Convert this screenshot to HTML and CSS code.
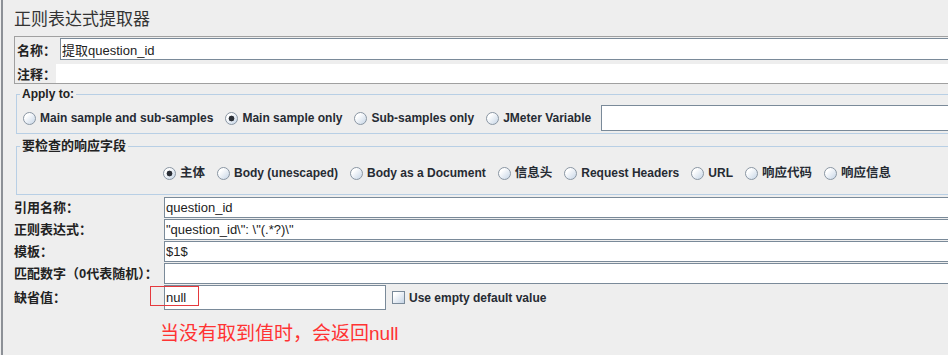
FILE: index.html
```html
<!DOCTYPE html>
<html lang="zh-CN">
<head>
  <meta charset="UTF-8">
  <title>正则表达式提取器</title>
  <link rel="stylesheet" href="styles.css">
</head>
<body>

<div class="editor">
  <h1 class="title">正则表达式提取器</h1>

  <!-- 名称 / 注释 -->
  <div class="name-box">
    <div class="name-row">
      <label for="name">名称：</label>
      <input type="text" id="name" value="提取question_id">
    </div>
    <div class="comment-row">
      <label for="comment">注释：</label>
      <input type="text" id="comment">
    </div>
  </div>

  <!-- Apply to -->
  <fieldset class="group apply">
    <legend>Apply to:</legend>
    <div class="radio-row">
      <label class="opt"><input type="radio" name="scope" class="radio">Main sample and sub-samples</label>
      <label class="opt"><input type="radio" name="scope" class="radio" checked>Main sample only</label>
      <label class="opt"><input type="radio" name="scope" class="radio">Sub-samples only</label>
      <label class="opt last"><input type="radio" name="scope" class="radio">JMeter Variable</label>
      <input type="text" class="var-input">
    </div>
  </fieldset>

  <!-- 要检查的响应字段 -->
  <fieldset class="group fields">
    <legend>要检查的响应字段</legend>
    <div class="radio-row field-row">
      <label class="opt cjk"><input type="radio" name="field" class="radio" checked>主体</label>
      <label class="opt"><input type="radio" name="field" class="radio">Body (unescaped)</label>
      <label class="opt"><input type="radio" name="field" class="radio">Body as a Document</label>
      <label class="opt cjk"><input type="radio" name="field" class="radio">信息头</label>
      <label class="opt"><input type="radio" name="field" class="radio">Request Headers</label>
      <label class="opt"><input type="radio" name="field" class="radio">URL</label>
      <label class="opt cjk"><input type="radio" name="field" class="radio">响应代码</label>
      <label class="opt cjk"><input type="radio" name="field" class="radio">响应信息</label>
    </div>
  </fieldset>

  <!-- 参数 -->
  <div class="params">
    <label for="ref_name">引用名称：</label>
    <input type="text" id="ref_name" value="question_id">

    <label for="regex">正则表达式：</label>
    <input type="text" id="regex" value="&quot;question_id\&quot;: \&quot;(.*?)\&quot;">

    <label for="template">模板：</label>
    <input type="text" id="template" value="$1$">

    <label for="match_no">匹配数字（0代表随机）：</label>
    <input type="text" id="match_no">

    <label for="default_val">缺省值：</label>
    <div class="default-cell">
      <input type="text" id="default_val" class="default-input" value="null">
      <span class="mark"></span>
      <label class="check"><input type="checkbox" class="checkbox">Use empty default value</label>
    </div>
  </div>

  <p class="note">当没有取到值时，会返回null</p>
</div>

</body>
</html>
```

FILE: styles.css
```css
* {
  box-sizing: border-box;
}
body {
  margin: 0;
  height: 355px;
  overflow: hidden;
  background-color: #eeeeee;
  font-family: "Liberation Sans", "Noto Sans CJK SC", sans-serif;
  color: #222;
}
.editor {
  width: 1020px;
  height: 355px;
  margin-left: 1px;
  border-left: 2px solid #8c9096;
  padding-left: 11px;
}
.title {
  margin: 0;
  padding-top: 9px;
  font-size: 17px;
  font-weight: normal;
  line-height: 22px;
  color: #333;
}

/* 名称 / 注释 */
.name-box {
  margin-top: 5px;
  border: 1px solid #a0a0a0;
  border-right: 0;
  padding-top: 1px;
}
.name-row, .comment-row {
  display: flex;
  align-items: center;
}
.name-row {
  height: 22px;
}
.comment-row {
  height: 19px;
  margin-top: 4px;
}
.name-row label, .comment-row label {
  padding-left: 2px;
  font-size: 13px;
  font-weight: bold;
  white-space: nowrap;
}
.name-row label {
  width: 45px;
}
.comment-row label {
  width: 41px;
}
input[type="text"] {
  font-family: "Liberation Sans", "Noto Sans CJK SC", sans-serif;
  font-size: 13px;
  color: #222;
  background-color: #fff;
  border: 1px solid #7a8a99;
  padding: 0 1px;
  margin: 0;
  outline: none;
}
.name-row input {
  flex: 1;
  height: 22px;
}
.comment-row input {
  flex: 1;
  height: 19px;
  border: 0;
}

/* groupes */
.group {
  margin: 0 0 0 2px;
  border: 1px solid #b8cfe5;
  border-right: 0;
  padding: 0 0 2px 3px;
  min-width: 0;
}
.group legend {
  padding: 0 2px;
  font-weight: bold;
  line-height: 16px;
}
.apply {
  margin-top: 2px;
}
.apply legend {
  font-size: 12px;
}
.fields {
  margin-top: 4px;
  padding-bottom: 13px;
}
.fields legend {
  font-size: 13px;
}
.radio-row {
  display: flex;
  align-items: center;
  padding-top: 3px;
  height: 29px;
}
.apply .radio-row {
  padding-left: 3px;
}
.field-row {
  height: 27px;
  padding-top: 11px;
  margin-left: 143px;
}
.opt {
  display: flex;
  align-items: center;
  margin-right: 12px;
  font-size: 12px;
  font-weight: bold;
  line-height: 16px;
  color: #262b33;
  white-space: nowrap;
}
.opt.cjk {
  font-size: 12.5px;
}
.opt.last {
  margin-right: 10px;
}
.radio {
  appearance: none;
  -webkit-appearance: none;
  width: 13px;
  height: 13px;
  margin: 0 4px 0 0;
  border: 1px solid #8a96a3;
  border-radius: 50%;
  background: linear-gradient(135deg, #ffffff 25%, #c6d5e6);
}
.radio:checked {
  background: radial-gradient(circle, #2b2f36 0 2.6px, transparent 3.2px), linear-gradient(135deg, #ffffff 25%, #c6d5e6);
}
.var-input {
  flex: 1;
  height: 26px;
}

/* paramètres */
.params {
  display: grid;
  grid-template-columns: 150px 1fr;
  grid-template-rows: 21px 21px 21px 21px 25px;
  row-gap: 1px;
  margin-top: 2px;
  align-items: center;
}
.params > label {
  font-size: 13px;
  font-weight: bold;
  line-height: 16px;
  white-space: nowrap;
}
.params > input {
  height: 21px;
}
.default-cell {
  position: relative;
  display: flex;
  align-items: center;
  height: 25px;
}
.default-input {
  width: 222px;
  height: 25px;
  border-color: #8e9aa6;
}
.mark {
  position: absolute;
  left: -14px;
  top: 1px;
  width: 49px;
  height: 20px;
  border: 1px solid #e5393d;
}
.check {
  display: flex;
  align-items: center;
  margin-left: 6px;
  font-size: 12px;
  font-weight: bold;
  color: #262b33;
}
.checkbox {
  appearance: none;
  -webkit-appearance: none;
  width: 13px;
  height: 13px;
  margin: 0 4px 0 0;
  border: 1px solid #7a8a99;
  background: linear-gradient(135deg, #ffffff 20%, #c5d4e5);
}

.note {
  margin: 12px 0 0 146px;
  font-size: 19px;
  line-height: 24px;
  color: #ff3333;
}
```
